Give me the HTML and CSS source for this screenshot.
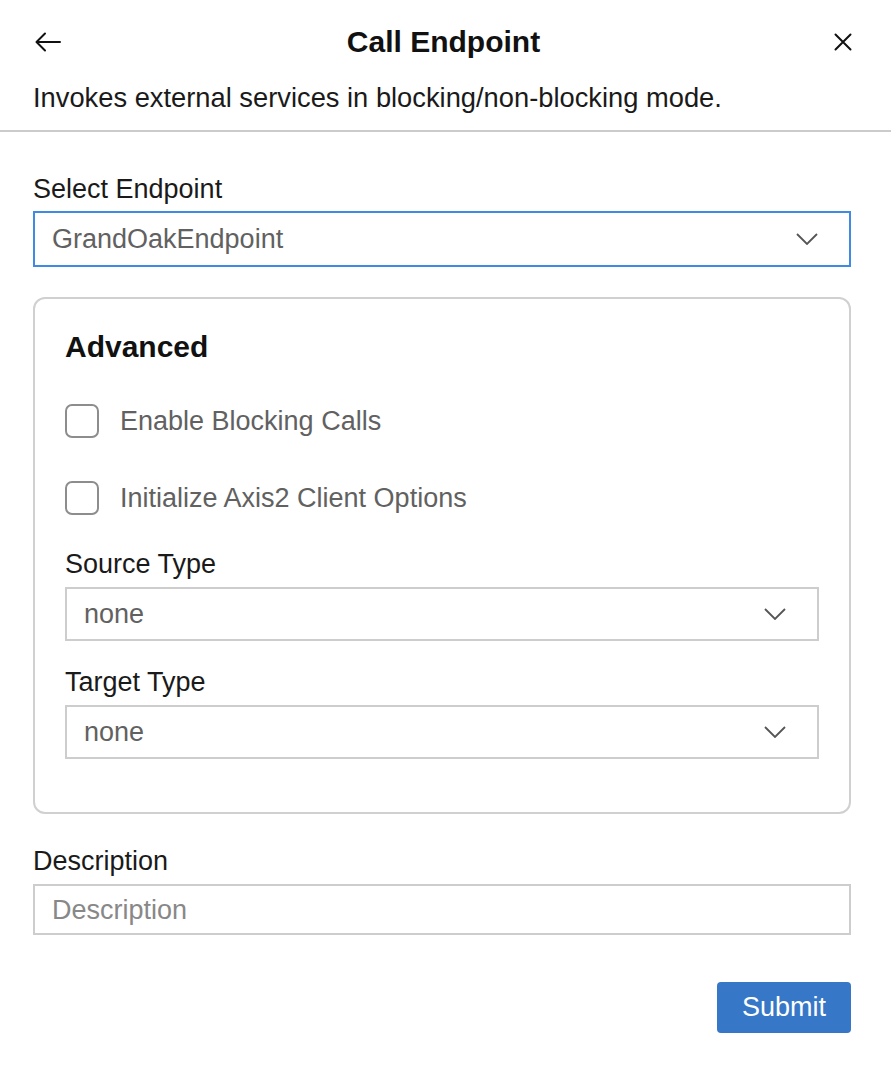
FILE: index.html
```html
<!DOCTYPE html>
<html lang="en">
<head>
<meta charset="utf-8">
<title>Call Endpoint</title>
<link rel="stylesheet" href="styles.css">
</head>
<body>
<div class="panel">
  <header class="top">
    <div class="header-row">
      <button class="icon-btn back" aria-label="Back">
        <svg width="26" height="20" viewBox="0 0 26 20"><path d="M25 10H2M10 1.5L1.5 10 10 18.5" fill="none" stroke="#111" stroke-width="2" stroke-linecap="round" stroke-linejoin="round"/></svg>
      </button>
      <h1 class="title">Call Endpoint</h1>
      <button class="icon-btn close" aria-label="Close">
        <svg width="18" height="18" viewBox="0 0 18 18"><path d="M1.5 1.5L16.5 16.5M16.5 1.5L1.5 16.5" fill="none" stroke="#111" stroke-width="2" stroke-linecap="round"/></svg>
      </button>
    </div>
    <p class="subtitle">Invokes external services in blocking/non-blocking mode.</p>
  </header>

  <main class="form">
    <div class="field">
      <label class="label">Select Endpoint</label>
      <div class="select focused">
        <span class="value">GrandOakEndpoint</span>
        <svg class="chev" width="22" height="12" viewBox="0 0 22 12"><path d="M1 1l10 10L21 1" fill="none" stroke="#555" stroke-width="1.8"/></svg>
      </div>
    </div>

    <section class="card">
      <h2 class="card-title">Advanced</h2>
      <div class="check-row first">
        <span class="checkbox"></span>
        <span class="check-label">Enable Blocking Calls</span>
      </div>
      <div class="check-row">
        <span class="checkbox"></span>
        <span class="check-label">Initialize Axis2 Client Options</span>
      </div>
      <div class="field inner first-inner">
        <label class="label">Source Type</label>
        <div class="select">
          <span class="value">none</span>
          <svg class="chev" width="22" height="12" viewBox="0 0 22 12"><path d="M1 1l10 10L21 1" fill="none" stroke="#555" stroke-width="1.8"/></svg>
        </div>
      </div>
      <div class="field inner second-inner">
        <label class="label">Target Type</label>
        <div class="select">
          <span class="value">none</span>
          <svg class="chev" width="22" height="12" viewBox="0 0 22 12"><path d="M1 1l10 10L21 1" fill="none" stroke="#555" stroke-width="1.8"/></svg>
        </div>
      </div>
    </section>

    <div class="field desc">
      <label class="label">Description</label>
      <div class="input"><span class="placeholder">Description</span></div>
    </div>

    <div class="actions">
      <button class="submit">Submit</button>
    </div>
  </main>
</div>
</body>
</html>
```

FILE: styles.css
```css
* { box-sizing: border-box; }
html, body { margin: 0; padding: 0; background: #fff; }
body {
  font-family: "Liberation Sans", Arial, Helvetica, sans-serif;
  font-size: 27px;
  color: #1a1a1a;
}
.panel { width: 891px; }

.top {
  border-bottom: 2px solid #cbcbcb;
  padding: 14px 0 16px;
}
.header-row {
  height: 56px;
  display: grid;
  grid-template-columns: 1fr auto 1fr;
  align-items: center;
  padding: 0 39px 0 35px;
}
.icon-btn {
  background: none;
  border: 0;
  padding: 0;
  width: 26px;
  height: 26px;
  display: flex;
  align-items: center;
  justify-content: center;
}
.back { justify-self: start; }
.close { width: 18px; justify-self: end; }
.title {
  margin: 0;
  font-size: 30px;
  font-weight: 700;
  color: #111;
  line-height: 36px;
}
.subtitle {
  margin: 12px 0 0;
  padding: 0 33px;
  line-height: 32px;
  font-size: 27.3px;
  color: #1a1a1a;
}

.form {
  padding: 41px 40px 40px 33px;
  display: flex;
  flex-direction: column;
}
.field { display: flex; flex-direction: column; }
.label {
  line-height: 32px;
  color: #1a1a1a;
  margin-bottom: 6px;
}
.select {
  height: 56px;
  border: 2px solid #cdcdcd;
  display: flex;
  align-items: center;
  justify-content: space-between;
  padding: 0 31px 0 17px;
}
.select.focused { border-color: #3f8ae4; }
.value { color: #616161; line-height: 32px; }
.chev { display: block; }

.card {
  margin-top: 30px;
  border: 2px solid #d0d0d0;
  border-radius: 12px;
  padding: 30px 30px 53px 30px;
  display: flex;
  flex-direction: column;
}
.card-title {
  margin: 0;
  font-size: 30px;
  font-weight: 700;
  line-height: 36px;
  color: #111;
}
.check-row {
  display: flex;
  align-items: center;
  gap: 21px;
  height: 34px;
  margin-top: 43px;
}
.check-row.first { margin-top: 39px; }
.checkbox {
  width: 34px;
  height: 34px;
  border: 2px solid #8d8d8d;
  border-radius: 7px;
  flex: none;
}
.check-label { color: #616161; line-height: 32px; }
.inner .label { margin-bottom: 7px; }
.inner .select { height: 54px; }
.first-inner { margin-top: 33px; }
.second-inner { margin-top: 25px; }

.desc { margin-top: 31px; }
.desc .label { margin-bottom: 7px; }
.input {
  height: 51px;
  border: 2px solid #cdcdcd;
  display: flex;
  align-items: center;
  padding: 0 17px;
}
.placeholder { color: #888; line-height: 32px; }

.actions {
  display: flex;
  justify-content: flex-end;
  margin-top: 47px;
}
.submit {
  width: 134px;
  height: 51px;
  background: #3677c7;
  color: #fff;
  border: 0;
  border-radius: 4px;
  font-family: inherit;
  font-size: 27px;
  padding: 0;
}
```
